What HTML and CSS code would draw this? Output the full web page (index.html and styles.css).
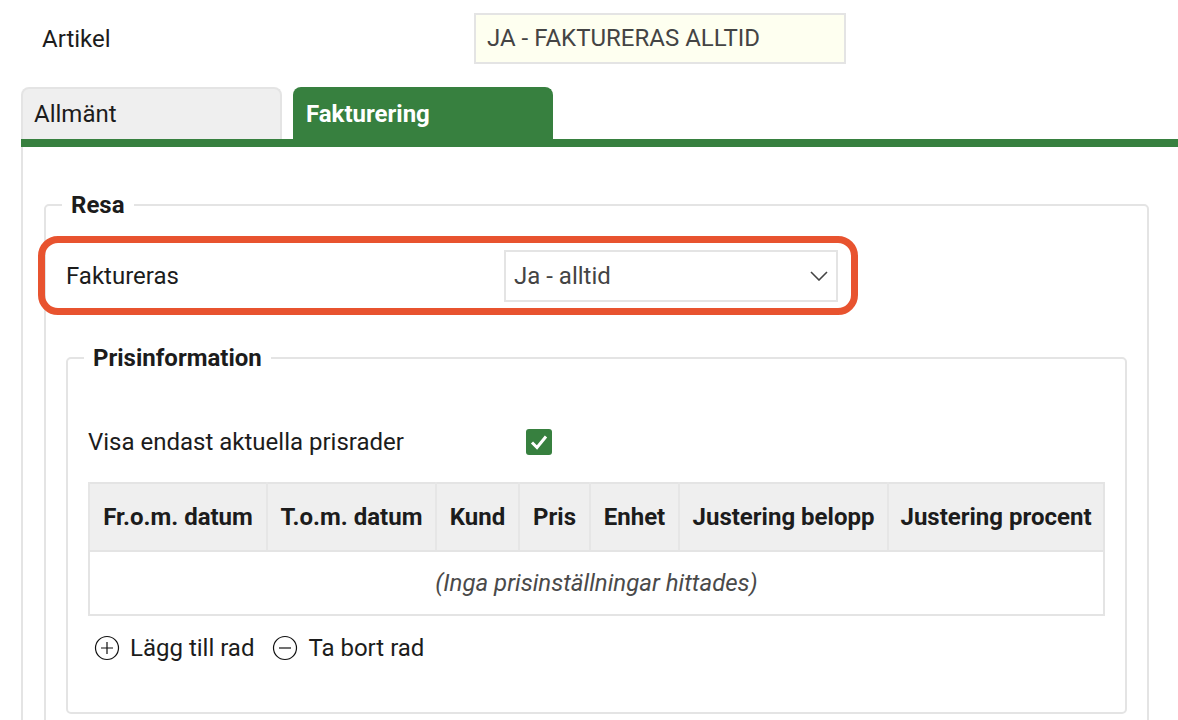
FILE: index.html
```html
<!DOCTYPE html>
<html>
<head>
    <title>Artikel</title>
    <link rel="stylesheet" href="styles.css">
</head>
<body>
    <div class="head-row">
        <label class="head-label">Artikel</label>
        <div class="head-value">JA - FAKTURERAS ALLTID</div>
    </div>

    <div class="tabs">
        <div class="tab">Allmänt</div>
        <div class="tab tab-active">Fakturering</div>
    </div>

    <div class="panel">
        <fieldset class="group">
            <legend>Resa</legend>

            <div class="field-row">
                <label class="field-label">Faktureras</label>
                <div class="select">
                    <span>Ja - alltid</span>
                    <svg class="chevron" width="18" height="10" viewBox="0 0 18 10">
                        <path d="M1 1 L9 9 L17 1" fill="none" stroke="#444" stroke-width="1.6"/>
                    </svg>
                </div>
                <div class="highlight"></div>
            </div>

            <fieldset class="group group-inner">
                <legend>Prisinformation</legend>

                <div class="check-row">
                    <label class="check-label">Visa endast aktuella prisrader</label>
                    <span class="checkbox">
                        <svg width="18" height="16" viewBox="0 0 18 16">
                            <path d="M2 8.5 L7 13.5 L16 2.5" fill="none" stroke="#fff" stroke-width="3"/>
                        </svg>
                    </span>
                </div>

                <table class="price-table">
                    <colgroup>
                        <col class="c-from">
                        <col class="c-to">
                        <col class="c-kund">
                        <col class="c-pris">
                        <col class="c-enhet">
                        <col class="c-belopp">
                        <col class="c-procent">
                    </colgroup>
                    <thead>
                        <tr>
                            <th>Fr.o.m. datum</th>
                            <th>T.o.m. datum</th>
                            <th>Kund</th>
                            <th>Pris</th>
                            <th>Enhet</th>
                            <th>Justering belopp</th>
                            <th>Justering procent</th>
                        </tr>
                    </thead>
                    <tbody>
                        <tr>
                            <td colspan="7" class="empty">(Inga prisinställningar hittades)</td>
                        </tr>
                    </tbody>
                </table>

                <div class="actions">
                    <span class="action">
                        <svg width="26" height="26" viewBox="0 0 26 26">
                            <circle cx="13" cy="13" r="11.5" fill="none" stroke="#111" stroke-width="1.2"/>
                            <path d="M13 7 V19 M7 13 H19" stroke="#111" stroke-width="1.2"/>
                        </svg>
                        Lägg till rad
                    </span>
                    <span class="action">
                        <svg width="26" height="26" viewBox="0 0 26 26">
                            <circle cx="13" cy="13" r="11.5" fill="none" stroke="#111" stroke-width="1.2"/>
                            <path d="M7 13 H19" stroke="#111" stroke-width="1.2"/>
                        </svg>
                        Ta bort rad
                    </span>
                </div>
            </fieldset>
        </fieldset>
    </div>
</body>
</html>
```

FILE: styles.css
```css
body {
    margin: 0;
    font-family: Roboto, "Liberation Sans", sans-serif;
    font-size: 24px;
    color: #1c1c1c;
    background-color: #fff;
    overflow: hidden;
}

.head-row {
    display: flex;
    align-items: center;
    padding: 13px 0 0 42px;
}

.head-label {
    width: 432px;
}

.head-value {
    box-sizing: border-box;
    width: 372px;
    height: 51px;
    line-height: 47px;
    padding: 0 11px;
    background-color: #fefff0;
    border: 2px solid #e4e4e4;
    color: #444;
}

.tabs {
    display: flex;
    gap: 11px;
    margin: 23px 0 0 21px;
    border-bottom: 8px solid #37803f;
}

.tab {
    box-sizing: border-box;
    width: 261px;
    height: 52px;
    line-height: 50px;
    padding: 0 11px;
    background-color: #efefef;
    border: 2px solid #e4e4e4;
    border-bottom: none;
    border-radius: 8px 8px 0 0;
}

.tab-active {
    width: 260px;
    background-color: #37803f;
    border-color: #37803f;
    color: #fff;
    font-weight: bold;
}

.panel {
    margin-left: 21px;
    border-left: 2px solid #e4e4e4;
    padding: 44px 29px 0 21px;
}

.group {
    margin: 0;
    min-width: 0;
    padding: 31px 20px 50px 20px;
    border: 2px solid #e4e4e4;
    border-radius: 5px;
}

.group legend {
    margin-left: -4px;
    padding: 0 9px;
    font-weight: bold;
    line-height: 28px;
}

.group-inner {
    margin-top: 42px;
    padding-top: 50px;
}

.field-row {
    position: relative;
    display: flex;
    align-items: center;
}

.field-label {
    width: 438px;
}

.select {
    box-sizing: border-box;
    display: flex;
    align-items: center;
    justify-content: space-between;
    width: 334px;
    height: 52px;
    padding: 0 8px 0 8px;
    border: 2px solid #e4e4e4;
    color: #444;
}

.highlight {
    position: absolute;
    left: -28px;
    top: -14px;
    width: 820px;
    height: 79px;
    box-sizing: border-box;
    border: 7px solid #e8532f;
    border-radius: 20px;
}

.check-row {
    display: flex;
    align-items: center;
    height: 40px;
}

.check-label {
    width: 438px;
}

.checkbox {
    display: flex;
    align-items: center;
    justify-content: center;
    width: 26px;
    height: 26px;
    border-radius: 3px;
    background-color: #37803f;
}

.price-table {
    width: 100%;
    margin-top: 20px;
    border-collapse: collapse;
    table-layout: fixed;
    border: 2px solid #e4e4e4;
}

.c-from { width: 178px; }
.c-to { width: 169px; }
.c-kund { width: 83px; }
.c-pris { width: 71px; }
.c-enhet { width: 89px; }
.c-belopp { width: 209px; }

.price-table th {
    height: 66px;
    padding: 0;
    background-color: #efefef;
    border-left: 2px solid #e6e6e6;
    border-bottom: 2px solid #e4e4e4;
    font-weight: bold;
    white-space: nowrap;
}

.empty {
    height: 60px;
    text-align: center;
    font-style: italic;
    color: #4a4a4a;
}

.actions {
    display: flex;
    align-items: center;
    gap: 18px;
    margin-top: 18px;
    padding-left: 6px;
}

.action {
    display: flex;
    align-items: center;
    gap: 10px;
}
```
